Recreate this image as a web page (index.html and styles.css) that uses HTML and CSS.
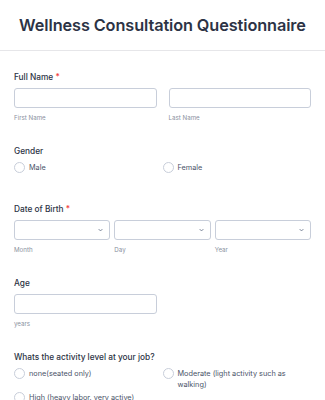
FILE: index.html
```html
<!DOCTYPE html>
<html lang="en">
<head>
    <meta charset="UTF-8">
    <meta name="viewport" content="width=device-width, initial-scale=1.0">
    <title>Wellness Consultation Questionnaire</title>
    <link rel="stylesheet" href="styles.css">
</head>
<body>
    <div class="form-header">
        <h1>Wellness Consultation Questionnaire</h1>
    </div>

    <form class="form-body">
        <div class="field">
            <label class="label">Full Name <span class="req">*</span></label>
            <div class="row two">
                <div class="sub">
                    <input type="text" class="input">
                    <span class="sublabel">First Name</span>
                </div>
                <div class="sub">
                    <input type="text" class="input">
                    <span class="sublabel">Last Name</span>
                </div>
            </div>
        </div>

        <div class="field">
            <label class="label">Gender</label>
            <div class="options">
                <label class="option"><span class="radio"></span>Male</label>
                <label class="option"><span class="radio"></span>Female</label>
            </div>
        </div>

        <div class="field">
            <label class="label">Date of Birth <span class="req">*</span></label>
            <div class="row three">
                <div class="sub">
                    <div class="select"><svg viewBox="0 0 8 5"><path d="M1 1l3 3 3-3"/></svg></div>
                    <span class="sublabel">Month</span>
                </div>
                <div class="sub">
                    <div class="select"><svg viewBox="0 0 8 5"><path d="M1 1l3 3 3-3"/></svg></div>
                    <span class="sublabel">Day</span>
                </div>
                <div class="sub">
                    <div class="select"><svg viewBox="0 0 8 5"><path d="M1 1l3 3 3-3"/></svg></div>
                    <span class="sublabel">Year</span>
                </div>
            </div>
        </div>

        <div class="field">
            <label class="label">Age</label>
            <div class="row two">
                <div class="sub">
                    <input type="text" class="input">
                    <span class="sublabel">years</span>
                </div>
            </div>
        </div>

        <div class="field">
            <label class="label">Whats the activity level at your job?</label>
            <div class="options">
                <label class="option"><span class="radio"></span>none(seated only)</label>
                <label class="option"><span class="radio"></span>Moderate (light activity such as walking)</label>
                <label class="option"><span class="radio"></span>High (heavy labor, very active)</label>
            </div>
        </div>
    </form>
</body>
</html>
```

FILE: styles.css
```css
* {
    margin: 0;
    padding: 0;
    box-sizing: border-box;
    font-family: Inter, "Noto Sans", sans-serif;
}

body {
    background-color: #fff;
    color: #2c3345;
}

.form-header {
    height: 51px;
    border-bottom: 1px solid #e6e6e9;
    display: flex;
    align-items: center;
    justify-content: center;
}

.form-header h1 {
    font-size: 16.3px;
    font-weight: 600;
    color: #2c3345;
    letter-spacing: -0.1px;
}

.form-body {
    padding: 20px 14px 0 14px;
}

.field {
    margin-bottom: 23px;
}

.label {
    display: block;
    font-size: 8.3px;
    line-height: 12px;
    font-weight: 500;
    color: #2c3345;
    margin-bottom: 5px;
}

.req {
    color: #f23a3c;
}

.row {
    display: grid;
    gap: 12px;
}

.row.two {
    grid-template-columns: 1fr 1fr;
}

.row.three {
    grid-template-columns: 1fr 1fr 1fr;
    gap: 4px;
}

.sub {
    display: flex;
    flex-direction: column;
}

.input,
.select {
    height: 20px;
    width: 100%;
    border: 1px solid #c8ceda;
    border-radius: 3px;
    background: #fff;
}

.select {
    display: flex;
    align-items: center;
    justify-content: flex-end;
    padding-right: 6px;
}

.select svg {
    width: 5px;
    height: 4px;
    fill: none;
    stroke: #57647e;
    stroke-width: 1.2;
}

.sublabel {
    font-size: 6.2px;
    line-height: 8px;
    color: #8a91a0;
    margin-top: 6px;
}

.options {
    display: grid;
    grid-template-columns: 1fr 1fr;
    row-gap: 2px;
    padding-bottom: 7px;
}

.option {
    display: flex;
    align-items: flex-start;
    font-size: 7.3px;
    color: #4a5368;
    line-height: 11px;
    padding-right: 8px;
}

.radio {
    flex-shrink: 0;
    width: 11px;
    height: 11px;
    border: 1px solid #c8ceda;
    border-radius: 50%;
    margin-right: 4px;
}
```
